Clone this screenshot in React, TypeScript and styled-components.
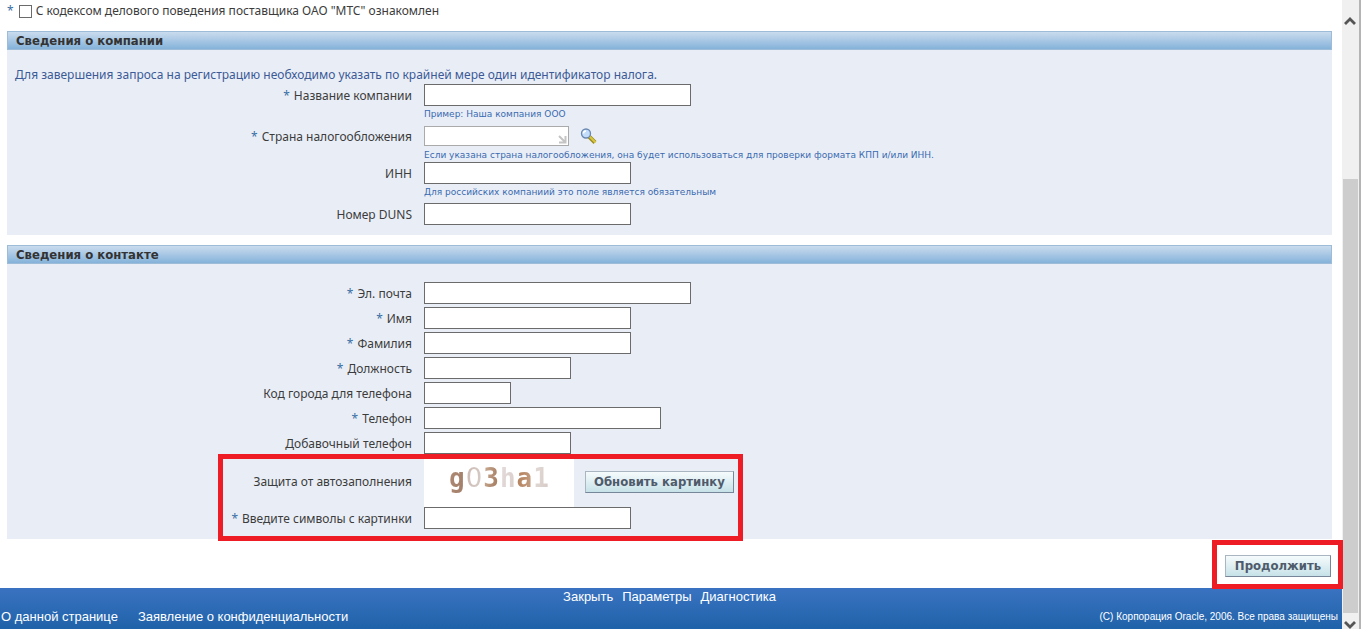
import React from 'react';
import styled, { createGlobalStyle, css } from 'styled-components';

const ui = '"Noto Sans", Tahoma, "DejaVu Sans", sans-serif';
const strong = '"DejaVu Sans Condensed", Tahoma, "DejaVu Sans", sans-serif';
const small = '"DejaVu Sans", Verdana, sans-serif';
const arial = '"Liberation Sans", Arial, sans-serif';

const GlobalStyle = createGlobalStyle`
  *, *::after { box-sizing: border-box; }
  body { margin: 0; background: #fff; color: #3c3c3c; font: 12px/16px ${ui}; }
`;

const Shell = styled.div`
  display: grid;
  grid-template-columns: minmax(0, 1fr) 19px;
  min-height: 100vh;
`;

const Page = styled.div`
  display: flex;
  flex-direction: column;
`;

const Main = styled.main`
  flex: 1;
  padding: 0 10px 0 7px;
`;

const Agreement = styled.label`
  display: flex;
  align-items: center;
  height: 22px;
  margin-bottom: 9px;
  line-height: 18px;
`;

const Star = styled.span`
  color: #3a6ea5;
  margin-right: 4px;
`;

const CheckBox = styled.input`
  appearance: none;
  width: 13px;
  height: 13px;
  margin: 0 4px 0 1px;
  border: 1px solid #6b6b6b;
  background: #fff;
  &:checked { background: #3a6ea5; }
`;

const Section = styled.section`
  margin-bottom: 10px;
  &:last-of-type { margin-bottom: 0; }
`;

const SectionTitle = styled.h2`
  height: 19px;
  margin: 0;
  padding: 0 8px;
  border: 1px solid #9dbcd8;
  background: linear-gradient(#cadcee, #85b2da);
  color: #333;
  font: bold 13px/18px ${strong};
`;

const SectionBody = styled.div<{ $top: number }>`
  padding: ${p => p.$top}px 0 10px;
  background: #e9eef6;
`;

const Intro = styled.p`
  height: 17px;
  margin: 0;
  padding-left: 8px;
  color: #3c5a96;
`;

const Row = styled.div<{ $gap: number }>`
  display: grid;
  grid-template-columns: 405px minmax(0, 1fr);
  column-gap: 12px;
  margin-bottom: ${p => p.$gap}px;
`;

const Label = styled.label<{ $height: number }>`
  height: ${p => p.$height}px;
  padding-top: ${p => (p.$height > 22 ? 0 : 1)}px;
  line-height: ${p => p.$height}px;
  text-align: right;
`;

const Control = styled.div<{ $height: number }>`
  display: flex;
  align-items: center;
  height: ${p => p.$height}px;
`;

const TextBox = styled.input<{ $width: number; $lookup?: boolean }>`
  width: ${p => p.$width}px;
  height: 22px;
  padding: 1px 3px;
  border: 1px solid #6b6b6b;
  background: #fff;
  font: 12px/16px ${ui};
  ${p => p.$lookup && css`
    height: 20px;
    border-color: #aaa;
  `}
`;

const LookupField = styled.div`
  position: relative;
  display: flex;
  & > svg { position: absolute; right: 2px; bottom: 2px; }
`;

const IconButton = styled.button`
  display: flex;
  margin-left: 11px;
  padding: 0;
  border: 0;
  background: none;
`;

const Hint = styled.div`
  grid-column: 2;
  height: 15px;
  color: #3a6ab0;
  font: 9px/17px ${small};
`;

const Button = styled.button`
  min-width: 106px;
  height: 22px;
  padding: 0 8px;
  border: 1px solid;
  border-color: #a9b6c1 #78869a #78869a #a9b6c1;
  background: linear-gradient(#f6fbfc, #c6e2e8);
  color: #4f5b6b;
  font: bold 13px/18px ${strong};
`;

const frame = css`
  &::after {
    content: '';
    position: absolute;
    border: 5px solid #ee1c25;
    pointer-events: none;
  }
`;

const CaptchaGroup = styled.div`
  position: relative;
  ${frame}
  &::after { left: 211px; top: -3px; width: 525px; bottom: -12px; }
`;

const Captcha = styled.div`
  display: flex;
  justify-content: center;
  gap: 1px;
  width: 150px;
  height: 50px;
  margin-right: 11px;
  background: #fff;
  font: 26px/42px "DejaVu Sans Mono", monospace;
`;

const Glyph = styled.span<{ $from: string; $to: string; $bold?: boolean; $sans?: boolean }>`
  background: linear-gradient(100deg, ${p => p.$from}, ${p => p.$to});
  background-clip: text;
  -webkit-background-clip: text;
  color: transparent;
  font-weight: ${p => (p.$bold ? 700 : 400)};
  ${p => p.$sans && css`font-family: ${small};`}
`;

const Actions = styled.div`
  display: flex;
  justify-content: flex-end;
  padding: 16px 1px 11px;
`;

const Framed = styled.div`
  position: relative;
  display: flex;
  ${frame}
  &::after { left: -13px; right: -12px; top: -15px; bottom: -12px; z-index: 1; }
`;

const Footer = styled.footer`
  padding: 0 4px 3px 1px;
  background: linear-gradient(#3a73c1, #1f62a9);
  color: #fff;
  font: 12px/18px ${arial};
`;

const FooterNav = styled.nav`
  display: flex;
  justify-content: center;
  gap: 9px;
`;

const FooterLine = styled.div`
  display: flex;
  gap: 20px;
  margin-top: 2px;
`;

const FooterLink = styled.a`
  color: #fff;
  font-size: 13px;
  text-decoration: none;
`;

const Copyright = styled.span`
  margin-left: auto;
  font-size: 10px;
`;

const ScrollBar = styled.div`
  display: flex;
  flex-direction: column;
  align-items: center;
  padding-top: 16px;
  padding-right: 1px;
  border-right: 2px solid #b4b4b4;
  background: #f0f0f0;
`;

const Thumb = styled.div`
  flex: 1;
  width: 15px;
  margin: 153px 0 6px;
  background: #cdcdcd;
`;

const Chevron = ({ down }: { down?: boolean }) => (
  <svg width="12" height="10" viewBox="0 0 12 10">
    <path d={down ? 'M1 3l5 5 5-5' : 'M1 8l5-5 5 5'} fill="none" stroke="#555" strokeWidth="2.800" />
  </svg>
);

type FieldProps = {
  id: string;
  label: string;
  width?: number;
  required?: boolean;
  hint?: string;
  gap?: number;
  height?: number;
  children?: React.ReactNode;
};

const Field = ({ id, label, width = 207, required, hint, gap = 3, height = 22, children }: FieldProps) => (
  <Row $gap={gap}>
    <Label htmlFor={id} $height={height}>
      {required && <Star>*</Star>}
      {label}
    </Label>
    <Control $height={height}>{children ?? <TextBox id={id} type="text" $width={width} />}</Control>
    {hint && <Hint>{hint}</Hint>}
  </Row>
);

export default function App() {
  return (
    <>
      <GlobalStyle />
      <Shell>
        <Page>
          <Main>
            <Agreement>
              <Star>*</Star>
              <CheckBox type="checkbox" />
              С кодексом делового поведения поставщика ОАО "МТС" ознакомлен
            </Agreement>

            <Section>
              <SectionTitle>Сведения о компании</SectionTitle>
              <SectionBody $top={17}>
                <Intro>Для завершения запроса на регистрацию необходимо указать по крайней мере один идентификатор налога.</Intro>
                <Field id="company" label="Название компании" required width={267} hint="Пример: Наша компания ООО" gap={4} />
                <Field id="country" label="Страна налогообложения" required gap={0}
                  hint="Если указана страна налогообложения, она будет использоваться для проверки формата КПП и/или ИНН.">
                  <LookupField>
                    <TextBox id="country" type="text" $width={145} $lookup />
                    <svg width="9" height="9" viewBox="0 0 9 9">
                      <path d="M1 1l6 6M7.500 1v6.500H1" fill="none" stroke="#c4c4c4" strokeWidth="2" />
                    </svg>
                  </LookupField>
                  <IconButton type="button" aria-label="Поиск">
                    <svg width="17" height="17" viewBox="0 0 17 17">
                      <path d="M9 8.500l6 6" stroke="#9a8a24" strokeWidth="4" />
                      <path d="M9.500 8.500l6 6" stroke="#d8c840" strokeWidth="2" />
                      <circle cx="6" cy="5.500" r="4.500" fill="#c3dcfa" stroke="#6a88b0" strokeWidth="1.300" />
                      <path d="M3.500 5.500a2.500 2.500 0 0 1 2.500-2.500" fill="none" stroke="#fff" strokeWidth="1.500" />
                    </svg>
                  </IconButton>
                </Field>
                <Field id="inn" label="ИНН" hint="Для российских компаниий это поле является обязательным" gap={4} />
                <Field id="duns" label="Номер DUNS" gap={0} />
              </SectionBody>
            </Section>

            <Section>
              <SectionTitle>Сведения о контакте</SectionTitle>
              <SectionBody $top={18}>
                <Field id="email" label="Эл. почта" required width={267} />
                <Field id="first" label="Имя" required />
                <Field id="last" label="Фамилия" required />
                <Field id="position" label="Должность" required width={147} />
                <Field id="area" label="Код города для телефона" width={87} />
                <Field id="phone" label="Телефон" required width={237} />
                <Field id="extension" label="Добавочный телефон" width={147} />
                <CaptchaGroup>
                  <Field id="refresh" label="Защита от автозаполнения" height={50} gap={0}>
                    <Captcha>
                      <Glyph $from="#b08c76" $to="#a07c68" $bold>g</Glyph>
                      <Glyph $from="#ccb8b0" $to="#d8d0cc" $sans>0</Glyph>
                      <Glyph $from="#d0b49c" $to="#986c50" $bold>3</Glyph>
                      <Glyph $from="#e4dcdc" $to="#d8ccc8" $bold>h</Glyph>
                      <Glyph $from="#b07850" $to="#c8a890" $bold>a</Glyph>
                      <Glyph $from="#e4dcd8" $to="#d4c8c4" $bold>1</Glyph>
                    </Captcha>
                    <Button id="refresh" type="button">Обновить картинку</Button>
                  </Field>
                  <Field id="captcha" label="Введите символы с картинки" required gap={0} />
                </CaptchaGroup>
              </SectionBody>
            </Section>

            <Actions>
              <Framed>
                <Button type="submit">Продолжить</Button>
              </Framed>
            </Actions>
          </Main>

          <Footer>
            <FooterNav>
              <FooterLink href="#close">Закрыть</FooterLink>
              <FooterLink href="#settings">Параметры</FooterLink>
              <FooterLink href="#diagnostics">Диагностика</FooterLink>
            </FooterNav>
            <FooterLine>
              <FooterLink href="#about">О данной странице</FooterLink>
              <FooterLink href="#privacy">Заявление о конфиденциальности</FooterLink>
              <Copyright>(C) Корпорация Oracle, 2006. Все права защищены</Copyright>
            </FooterLine>
          </Footer>
        </Page>
        <ScrollBar>
          <Chevron />
          <Thumb />
          <Chevron down />
        </ScrollBar>
      </Shell>
    </>
  );
}
